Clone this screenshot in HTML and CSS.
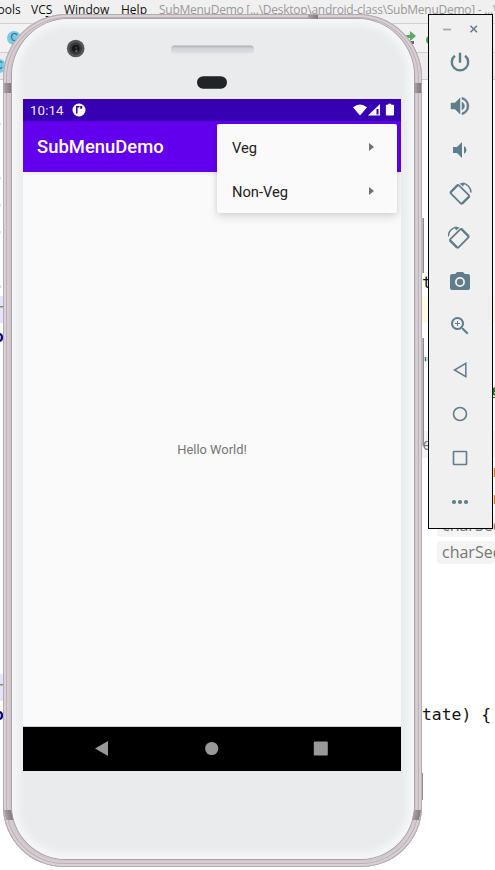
FILE: index.html
```
<!DOCTYPE html>
<html lang="en">
<head>
<meta charset="utf-8">
<title>SubMenuDemo</title>
<link rel="stylesheet" href="styles.css">
</head>
<body>
<div class="desktop">
  <section class="ide">
    <nav class="menubar">
      <span class="m-tools">Tools</span><span class="m-vcs">VC<u>S</u></span><span class="m-window"><u>W</u>indow</span><span class="m-help"><u>H</u>elp</span><span class="m-title">SubMenuDemo [...\Desktop\android-class\SubMenuDemo] - ...\</span>
    </nav>
    <div class="toolbar">
      <i class="class-icon first">C</i>
      <svg class="run" width="34" height="16" viewBox="0 0 34 16"><path d="M0 6h5V2l6 5-6 5V9H0z" fill="#59a869"/><path d="M5 12h4v3H5z" fill="#666"/><circle cx="25" cy="11" r="4" fill="#38a85a"/></svg>
    </div>
    <div class="tabs"><i class="class-icon second">C</i></div>
    <div class="editor">
      <div class="row"></div>
      <div class="row"><b class="l orange">,</b></div>
      <div class="row"></div>
      <div class="row"><b class="l orange">,</b></div>
      <div class="row"><b class="l orange">,</b></div>
      <div class="row"><b class="l orange">,</b></div>
      <div class="row"></div>
      <div class="row"><b class="l pink">.</b><span class="r">t</span></div>
      <div class="row current"><span class="l olive">r</span></div>
      <div class="row"><b class="l blue">o</b></div>
      <div class="row"><span class="r teal">"</span></div>
      <div class="row"><b class="r edge green">e</b></div>
      <div class="row"></div>
      <div class="row"><span class="r hint">re</span></div>
      <div class="row"><span class="r edge orange">r</span></div>
      <div class="row"><span class="r edge orange">r</span></div>
      <div class="row"><span class="r chip">charSeq</span></div>
      <div class="row"><span class="r chip">charSeq</span></div>
      <div class="row"></div>
      <div class="row"></div>
      <div class="row"></div>
      <div class="row"></div>
      <div class="row"><span class="l olive mark">r</span></div>
      <div class="row"><b class="l blue">o</b><span class="r">tate) {</span></div>
    </div>
  </section>

  <section class="phone">
    <i class="key power"></i><i class="key volume"></i><i class="key lower"></i>
    <i class="seam tl"></i><i class="seam tr"></i><i class="seam bl"></i><i class="seam br"></i><i class="seam top"></i>
    <div class="face">
      <header class="forehead">
        <svg width="400" height="79" viewBox="0 0 400 79">
          <defs><linearGradient id="slot" x2="0" y2="1"><stop stop-color="#a9acb2"/><stop offset=".35" stop-color="#d2d3d8"/><stop offset="1" stop-color="#e1e2e6"/></linearGradient></defs>
          <circle cx="63.7" cy="28.500" r="8.800" fill="#55565a"/><circle cx="63.7" cy="28.500" r="6.200" fill="#38393c"/><circle cx="63.7" cy="28.500" r="3.800" fill="#15171b"/><circle cx="64.4" cy="31" r="1.200" fill="#65652c"/><circle cx="64.2" cy="27.800" r="1" fill="#414650"/>
          <rect x="159" y="25.500" width="83" height="8" rx="3.500" fill="url(#slot)"/>
          <rect x="185" y="56.300" width="30" height="12.500" rx="6.200" fill="#202327"/>
        </svg>
      </header>
      <main class="screen">
        <div class="status">
          <span class="time">10:14</span>
          <svg class="notice" width="14" height="14" viewBox="0 0 14 14"><circle cx="7" cy="7" r="6.500" fill="#fff"/><path d="M4 3.100h1.500v7.500H4zM5.500 3.100h2v1.400h-2zM8.200 3.100h2v2.600h-2z" fill="#3700b3"/></svg>
          <svg class="signals" width="42" height="14" viewBox="0 0 42 14"><path d="M1 4.200Q8-1.200 15 4.200L8 12.500z" fill="#fff"/><path d="M28 1v11.500H16z" fill="#fff"/><path d="M24.500 6h2v5.500h-2z" fill="#3700b3"/><path d="M34.700 1.800h2V.8h3v1h2q.8 0 .8.8v9.200q0 .8-.8.8h-6.500q-.8 0-.8-.8V2.600q0-.8.5-.8z" transform="translate(-.5)" fill="#fff"/></svg>
        </div>
        <div class="appbar">SubMenuDemo</div>
        <div class="content">Hello World!</div>
        <div class="navbar">
          <svg width="378" height="44" viewBox="0 0 378 44" fill="#999"><path d="M72 21.500 85 14v15z"/><circle cx="188.700" cy="21.500" r="6.600"/><rect x="290.800" y="14.500" width="14" height="14" rx="1"/></svg>
        </div>
        <div class="popup">
          <div class="item"><span>Veg</span><i class="caret"></i></div>
          <div class="item"><span>Non-Veg</span><i class="caret"></i></div>
        </div>
      </main>
    </div>
  </section>

  <aside class="controls">
    <div class="window-buttons">
      <svg width="63" height="25" viewBox="0 0 63 25" stroke="#607d8b" fill="none"><path d="M14 14.500h8" stroke="#9aabb4" stroke-width="1.800"/><path d="m41.500 10.800 6.500 6.500m0-6.500-6.500 6.500" stroke-width="1.500"/></svg>
    </div>
    <svg viewBox="0 0 24 24"><path d="M13.200 2.700h-2.400v10h2.400v-10z"/><path d="M17.100 5.800A8.200 8.200 0 1 1 6.900 5.800" fill="none" stroke="#607d8b" stroke-width="2.400"/></svg>
    <svg viewBox="0 0 24 24"><path d="M3 9v6h4l5 5V4L7 9H3zm13.500 3A4.500 4.500 0 0 0 14 7.970v8.050A4.470 4.470 0 0 0 16.500 12zM14 3.230v2.060a7 7 0 0 1 0 13.420v2.060a9 9 0 0 0 0-17.540z" stroke="#607d8b" stroke-width=".5"/></svg>
    <svg viewBox="0 0 24 24"><path d="M18.500 12A4.500 4.500 0 0 0 16 7.970v8.050A4.470 4.470 0 0 0 18.500 12zM5 9v6h4l5 5V4L9 9H5z"/></svg>
    <svg viewBox="0 0 24 24"><g fill="none" stroke="#607d8b"><rect x="3.800" y="6.600" width="16" height="11.500" rx="1" transform="rotate(45 11.800 12.350)" stroke-width="1.800"/><path d="m2.500 10.300 7.500-7.500M14 21.800l7.500-7.500" stroke-width="2.300"/><path d="M13.500 1.700c5.500-.8 9.500 3.800 9.500 8.900" stroke-width="1.500"/></g><path d="m11.500 1.400 5.200-1-1.500 4z"/></svg>
    <svg viewBox="0 0 24 24"><g fill="none" stroke="#607d8b" transform="matrix(-1 0 0 1 23.200 0)"><rect x="3.800" y="6.600" width="16" height="11.500" rx="1" transform="rotate(45 11.800 12.350)" stroke-width="1.800"/><path d="m2.500 10.300 7.500-7.500M14 21.800l7.500-7.500" stroke-width="2.300"/><path d="M13.500 1.700c5.500-.8 9.500 3.800 9.500 8.900" stroke-width="1.500"/></g><path d="m11.700 1.400-5.200-1 1.500 4z"/></svg>
    <svg viewBox="0 0 24 24"><circle cx="12" cy="12" r="3.200"/><path d="M9 2 7.170 4H4a2 2 0 0 0-2 2v12a2 2 0 0 0 2 2h16a2 2 0 0 0 2-2V6a2 2 0 0 0-2-2h-3.170L15 2H9zm3 15a5 5 0 1 1 0-10 5 5 0 0 1 0 10z"/></svg>
    <svg viewBox="0 0 24 24"><path d="M15.500 14h-.790l-.280-.270a6.500 6.500 0 1 0-.700.700l.270.280v.790l5 4.990L20.490 19l-4.990-5zm-6 0a4.500 4.500 0 1 1 0-9 4.500 4.500 0 0 1 0 9z"/><path d="M12 10h-2v2H9v-2H7V9h2V7h1v2h2v1z"/></svg>
    <svg viewBox="0 0 24 24"><path d="M17.800 5.300v13.400L6.500 12z" fill="none" stroke="#607d8b" stroke-width="1.500"/></svg>
    <svg viewBox="0 0 24 24"><circle cx="12" cy="12" r="6.500" fill="none" stroke="#607d8b" stroke-width="1.600"/></svg>
    <svg viewBox="0 0 24 24"><rect x="5.500" y="5.500" width="13" height="13" rx=".5" fill="none" stroke="#607d8b" stroke-width="1.600"/></svg>
    <svg viewBox="0 0 24 24"><circle cx="6" cy="12" r="2.100"/><circle cx="12" cy="12" r="2.100"/><circle cx="18" cy="12" r="2.100"/></svg>
  </aside>
</div>
</body>
</html>
```

FILE: styles.css
```
* { box-sizing: border-box; }
body { margin: 0; }
.desktop { position: relative; width: 495px; height: 870px; overflow: hidden; background: #fff; }

/* Editor window behind the emulator */
.ide { width: 495px; height: 870px; overflow: hidden; }
.menubar { display: flex; height: 24px; background: #f0f0f0; border-bottom: 1px solid #d1d1d1; font: 12px/20px "Open Sans", sans-serif; color: #111; white-space: nowrap; }
.menubar u { text-underline-offset: 2px; }
.m-tools { flex: 0 0 31px; text-indent: -9px; }
.m-vcs { flex: 0 0 33px; }
.m-window { flex: 0 0 57px; }
.m-help { flex: 0 0 38px; }
.m-title { color: #999; letter-spacing: -.26px; }
.toolbar { display: flex; justify-content: space-between; height: 29px; background: #f2f2f2; border-bottom: 1px solid #cfcfcf; }
.tabs { height: 27px; background: #ececec; border-bottom: 1px solid #c9c9c9; }
.class-icon { display: block; width: 14px; height: 14px; border-radius: 50%; background: #78cbe6; color: #28657c; font: 10px/14px "Liberation Sans", sans-serif; text-align: center; }
.first { margin: 7px 0 0 7px; }
.second { margin: 6px 0 0 -8px; float: left; }
.run { margin: 5px 56px 0 0; }
.editor { font: 16.4px/27px "DejaVu Sans Mono", monospace; color: #111; }
.row { display: flex; height: 27px; white-space: pre; }
.l { flex: 0 0 10px; margin-left: -6px; }
.r { margin-left: auto; flex: 0 0 73px; min-width: 0; }
.r.edge { flex-basis: 4px; }
.current { background: linear-gradient(90deg, #e4e4ff 5px, #fffae3 5px); }
.mark { background: #e4e4ff; }
.orange { color: #c47a16; }
.pink { color: #c77697; }
.olive { color: #808052; }
.blue { color: #000080; }
.teal { color: #008080; }
.green { color: #008000; text-decoration: underline; }
.r.hint { flex-basis: 79px; color: #777; font: 16px/27px "Open Sans", sans-serif; background: #f4f4f4; }
.r.chip { flex-basis: 58px; height: 23px; margin-top: 2px; padding-left: 5px; border-radius: 4px; background: #f4f4f4; color: #777; font: 16px/22px "Open Sans", sans-serif; }

/* Device */
.phone { position: absolute; left: 3px; top: 14px; width: 419px; height: 853px; padding: 5px 8px 8px 9px; border-radius: 64px 64px 61px 61px; background: #cfc6ca; box-shadow: inset 0 0 0 1px #b3abaf, inset 0 0 0 3px #d9d1d5, inset 0 0 0 4px #b9b1b6, inset 0 0 0 6px #d5cdd1, inset 0 -3px 2px #8d8388; }
.face { width: 402px; height: 840px; padding: 0 11px; border-radius: 57px 57px 54px 54px; background: #e9ebed; box-shadow: 0 0 0 1px #aaa3a8, inset 0 0 7px 6px #f5f6f8; }
.forehead { height: 80px; padding-top: 1px; margin-left: -11px; }
.forehead svg { display: block; }
.key { position: absolute; left: 418px; width: 3px; background: #bbb6b9; border-right: 1px solid #8f8b8e; }
.power { top: 204px; height: 55px; }
.volume { top: 324px; height: 108px; }
.lower { top: 759px; height: 27px; width: 2px; }
.seam { position: absolute; width: 7px; height: 10px; background: linear-gradient(90deg, #aaa2a7, #81797f); }
.tl { left: 1px; top: 69px; }
.tr { right: 1px; top: 69px; }
.bl { left: 2px; top: 796px; transform: skewX(12deg); }
.br { right: 2px; top: 796px; transform: skewX(-12deg); }
.top { left: 305px; top: 1px; width: 10px; height: 4px; }

.screen { position: relative; width: 378px; height: 672px; display: flex; flex-direction: column; overflow: hidden; background: #fafafa; font-family: Roboto, sans-serif; }
.status { flex: 0 0 22px; display: flex; align-items: center; padding: 0 7px; background: #3700b3; color: #eee9fb; }
.time { width: 42px; font-size: 13.3px; letter-spacing: .1px; }
.notice { display: block; }
.signals { display: block; margin-left: auto; }
.appbar { flex: 0 0 51px; min-height: 0; padding-left: 14px; background: #6200ee; color: #fff; font-size: 18.4px; font-weight: 500; line-height: 52px; letter-spacing: .03px; box-shadow: 0 1px 4px rgba(0,0,0,.1); }
.content { flex: 1; display: flex; align-items: center; justify-content: center; border-bottom: 1px solid #ccc; color: #757575; font-size: 12.9px; }
.navbar { flex: 0 0 44px; background: #000; }
.navbar svg { display: block; }
.popup { position: absolute; left: 194px; top: 25px; width: 180px; height: 89px; border-radius: 2px; background: #fafafa; box-shadow: 0 4px 10px rgba(0,0,0,.13), 0 0 5px rgba(0,0,0,.08); }
.item { display: flex; align-items: center; justify-content: space-between; height: 44px; padding: 3px 23px 0 15px; color: #222; font-size: 14.7px; }
.caret { border: 4.5px solid transparent; border-left: 5px solid #707070; border-right: 0; margin-top: -2px; }

/* Emulator controls */
.controls { position: absolute; left: 428px; top: 14px; width: 65px; height: 515px; display: flex; flex-direction: column; align-items: center; border: 1px solid #000; background: #f0f0f0; }
.window-buttons { flex: 0 0 25px; }
.window-buttons svg { display: block; }
.controls > svg { flex: 0 0 44px; width: 24px; height: 24px; margin-right: 1px; fill: #607d8b; }
```
